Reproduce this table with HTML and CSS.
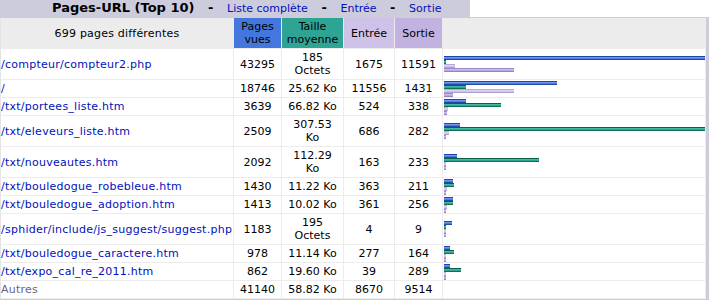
FILE: index.html
```html
<!DOCTYPE html>
<html>
<head>
<meta charset="utf-8">
<title>Pages-URL</title>
<link rel="stylesheet" href="styles.css">
</head>
<body>
<div class="frame">
  <div class="titlerow">
    <div class="title">Pages-URL (Top 10) &nbsp; - &nbsp; <a href="#">Liste complète</a> &nbsp; - &nbsp; <a href="#">Entrée</a> &nbsp; - &nbsp; <a href="#">Sortie</a></div>
    <div class="blank"></div>
  </div>
  <div class="tablewrap">
    <table class="data">
      <tr class="head">
        <th class="w-url">699 pages différentes</th>
        <th class="w-p hp">Pages<br>vues</th>
        <th class="w-k hk">Taille<br>moyenne</th>
        <th class="w-e he">Entrée</th>
        <th class="w-x hx">Sortie</th>
        <th class="w-bar">&nbsp;</th>
      </tr>
      <tr>
        <td class="url"><a href="#">/compteur/compteur2.php</a></td>
        <td>43295</td><td>185<br>Octets</td><td>1675</td><td>11591</td>
        <td class="bars"><div class="bar bp" style="width:261px"></div><div class="bar bk" style="width:2px"></div><div class="bar be" style="width:11px"></div><div class="bar bx" style="width:70px"></div></td>
      </tr>
      <tr>
        <td class="url"><a href="#">/</a></td>
        <td>18746</td><td>25.62 Ko</td><td>11556</td><td>1431</td>
        <td class="bars"><div class="bar bp" style="width:113px"></div><div class="bar bk" style="width:22px"></div><div class="bar be" style="width:70px"></div><div class="bar bx" style="width:9px"></div></td>
      </tr>
      <tr>
        <td class="url"><a href="#">/txt/portees_liste.htm</a></td>
        <td>3639</td><td>66.82 Ko</td><td>524</td><td>338</td>
        <td class="bars"><div class="bar bp" style="width:22px"></div><div class="bar bk" style="width:57px"></div><div class="bar be" style="width:4px"></div><div class="bar bx" style="width:3px"></div></td>
      </tr>
      <tr>
        <td class="url"><a href="#">/txt/eleveurs_liste.htm</a></td>
        <td>2509</td><td>307.53<br>Ko</td><td>686</td><td>282</td>
        <td class="bars"><div class="bar bp" style="width:16px"></div><div class="bar bk" style="width:261px"></div><div class="bar be" style="width:5px"></div><div class="bar bx" style="width:2px"></div></td>
      </tr>
      <tr>
        <td class="url"><a href="#">/txt/nouveautes.htm</a></td>
        <td>2092</td><td>112.29<br>Ko</td><td>163</td><td>233</td>
        <td class="bars"><div class="bar bp" style="width:13px"></div><div class="bar bk" style="width:95px"></div><div class="bar be" style="width:2px"></div><div class="bar bx" style="width:2px"></div></td>
      </tr>
      <tr>
        <td class="url"><a href="#">/txt/bouledogue_robebleue.htm</a></td>
        <td>1430</td><td>11.22 Ko</td><td>363</td><td>211</td>
        <td class="bars"><div class="bar bp" style="width:9px"></div><div class="bar bk" style="width:10px"></div><div class="bar be" style="width:3px"></div><div class="bar bx" style="width:2px"></div></td>
      </tr>
      <tr>
        <td class="url"><a href="#">/txt/bouledogue_adoption.htm</a></td>
        <td>1413</td><td>10.02 Ko</td><td>361</td><td>256</td>
        <td class="bars"><div class="bar bp" style="width:9px"></div><div class="bar bk" style="width:9px"></div><div class="bar be" style="width:3px"></div><div class="bar bx" style="width:2px"></div></td>
      </tr>
      <tr>
        <td class="url"><a href="#">/sphider/include/js_suggest/suggest.php</a></td>
        <td>1183</td><td>195<br>Octets</td><td>4</td><td>9</td>
        <td class="bars"><div class="bar bp" style="width:8px"></div><div class="bar bk" style="width:2px"></div><div class="bar be" style="width:2px"></div><div class="bar bx" style="width:2px"></div></td>
      </tr>
      <tr>
        <td class="url"><a href="#">/txt/bouledogue_caractere.htm</a></td>
        <td>978</td><td>11.14 Ko</td><td>277</td><td>164</td>
        <td class="bars"><div class="bar bp" style="width:6px"></div><div class="bar bk" style="width:10px"></div><div class="bar be" style="width:2px"></div><div class="bar bx" style="width:2px"></div></td>
      </tr>
      <tr>
        <td class="url"><a href="#">/txt/expo_cal_re_2011.htm</a></td>
        <td>862</td><td>19.60 Ko</td><td>39</td><td>289</td>
        <td class="bars"><div class="bar bp" style="width:6px"></div><div class="bar bk" style="width:17px"></div><div class="bar be" style="width:2px"></div><div class="bar bx" style="width:2px"></div></td>
      </tr>
      <tr>
        <td class="url"><span class="other">Autres</span></td>
        <td>41140</td><td>58.82 Ko</td><td>8670</td><td>9514</td>
        <td class="bars">&nbsp;</td>
      </tr>
    </table>
  </div>
</div>
</body>
</html>
```

FILE: styles.css
```css
html, body {
  margin: 0;
  padding: 0;
  background: #ffffff;
}

body {
  font-family: "DejaVu Sans", Verdana, "Liberation Sans", sans-serif;
  color: #000000;
}

.frame {
  width: 709px;
  height: 300px;
  overflow: hidden;
}

.titlerow {
  display: flex;
  height: 17px;
}

.title {
  width: 470px;
  box-sizing: border-box;
  padding-left: 52px;
  background: #CCCCDD;
  font-size: 13px;
  font-weight: bold;
  line-height: 16px;
  letter-spacing: 0;
  white-space: nowrap;
  overflow: hidden;
}

.title a {
  font-size: 11px;
  font-weight: normal;
  color: #0011BB;
  text-decoration: none;
}

.blank {
  flex: 1;
  background: #ffffff;
}

.tablewrap {
  background: #CCCCDD;
  padding: 1px 3px 2px 0;
}

.data {
  border-collapse: separate;
  border-spacing: 0;
  table-layout: fixed;
  width: 706px;
  background: #ffffff;
}

.data th,
.data td {
  box-sizing: border-box;
  font-size: 11px;
  font-weight: normal;
  line-height: 13px;
  padding: 2px;
  border-right: 1px solid #ECECEC;
  border-bottom: 1px solid #ECECEC;
  text-align: center;
  vertical-align: middle;
  white-space: nowrap;
  overflow: hidden;
  color: #000000;
}

.data .head th {
  background: #ECECEC;
}

.data th:first-child,
.data td:first-child {
  border-left: 1px solid #E4E4E4;
}

.w-url { width: 234px; letter-spacing: 0.2px; }
.w-p { width: 48px; }
.w-k { width: 62px; }
.w-e { width: 51px; }
.w-x { width: 48px; }
.w-bar { width: 263px; }

.data .head .hp { background: #4477DD; }
.data .head .hk { background: #2EA495; }
.data .head .he { background: #CEC2E8; }
.data .head .hx { background: #C1B2E0; }

.data td.url {
  text-align: left;
  padding: 2px 0;
  letter-spacing: 0.25px;
}

.url a {
  color: #0011BB;
  text-decoration: none;
}

.other {
  color: #666688;
}

.data td.bars {
  text-align: left;
  padding: 0 0 0 1px;
}

.bar {
  height: 4px;
}

.bp {
  background: linear-gradient(#1f44a8 0 1px, #6f98ec 1px 2px, #4a7ce0 2px 3px, #2349ad 3px 4px);
}

.bk {
  background: linear-gradient(#0c5e44 0 1px, #3fb8a4 1px 2px, #2ea495 2px 3px, #137052 3px 4px);
}

.be {
  background: linear-gradient(#b7a8dc 0 1px, #ddd3f2 1px 2px, #cec2e8 2px 3px, #b0a0d8 3px 4px);
}

.bx {
  background: linear-gradient(#9b88cc 0 1px, #cbbdea 1px 2px, #b8a8dc 2px 3px, #9684c8 3px 4px);
}
```
